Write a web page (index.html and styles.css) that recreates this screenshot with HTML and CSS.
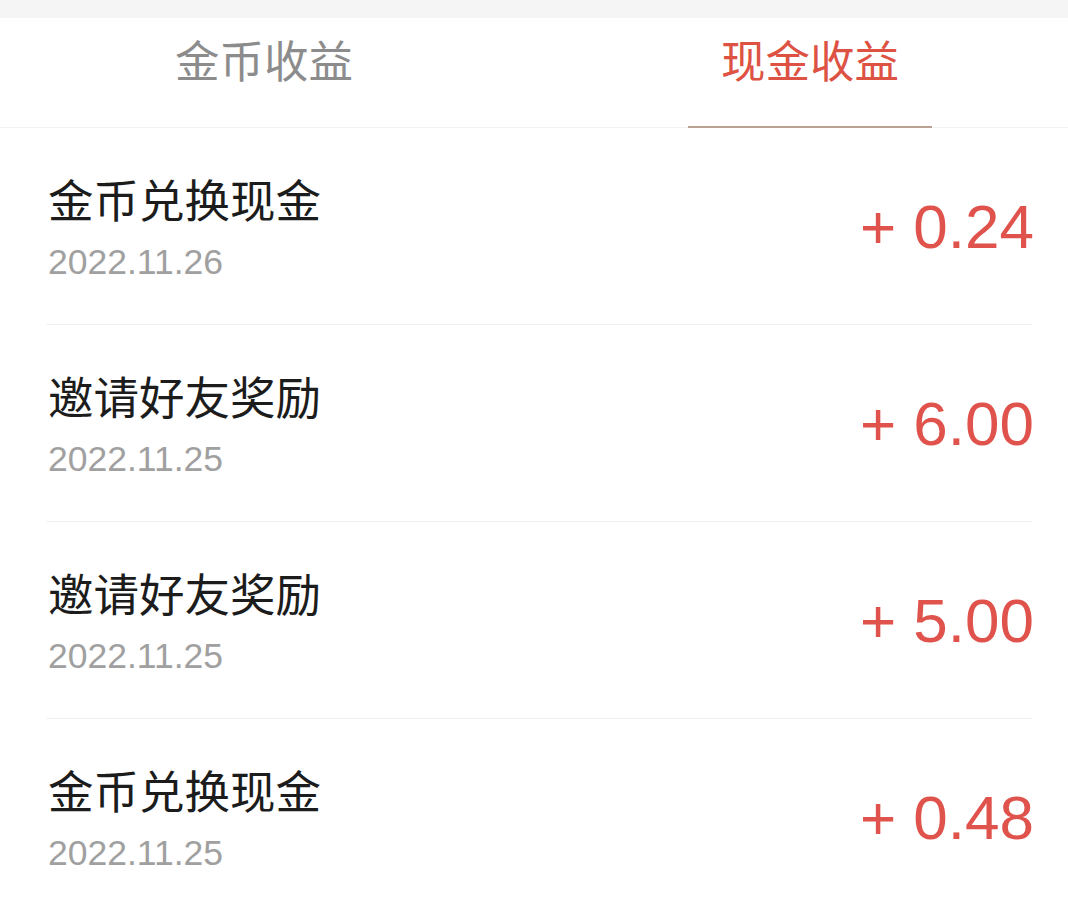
FILE: index.html
```html
<!DOCTYPE html>
<html lang="zh-CN">
<head>
  <meta charset="UTF-8">
  <title>现金收益</title>
  <link rel="stylesheet" href="styles.css">
</head>
<body>

  <div class="top-strip"></div>

  <div class="tabs">
    <div class="tab">金币收益</div>
    <div class="tab active">现金收益</div>
  </div>

  <ul class="records">
    <li class="record">
      <div class="info">
        <div class="title">金币兑换现金</div>
        <div class="date">2022.11.26</div>
      </div>
      <div class="amount">+ 0.24</div>
    </li>
    <li class="record">
      <div class="info">
        <div class="title">邀请好友奖励</div>
        <div class="date">2022.11.25</div>
      </div>
      <div class="amount">+ 6.00</div>
    </li>
    <li class="record">
      <div class="info">
        <div class="title">邀请好友奖励</div>
        <div class="date">2022.11.25</div>
      </div>
      <div class="amount">+ 5.00</div>
    </li>
    <li class="record">
      <div class="info">
        <div class="title">金币兑换现金</div>
        <div class="date">2022.11.25</div>
      </div>
      <div class="amount">+ 0.48</div>
    </li>
  </ul>

</body>
</html>
```

FILE: styles.css
```css
body {
  margin: 0;
  background: #fff;
  font-family: 'Liberation Sans', 'Noto Sans CJK SC', sans-serif;
  overflow: hidden;
}

.top-strip {
  height: 18px;
  background: #f5f5f5;
}

.tabs {
  display: flex;
  border-bottom: 1px solid #f3f3f3;
}

.tab {
  box-sizing: border-box;
  width: 244px;
  height: 110px;
  line-height: 82px;
  text-align: center;
  font-family: 'Noto Sans CJK SC', sans-serif;
  font-size: 44.5px;
  color: #8c8c8c;
  border-bottom: 2px solid transparent;
  margin-bottom: -1px;
}

.tab:first-child {
  margin-left: 142px;
}

.tab.active {
  margin-left: 302px;
  color: #dd5242;
  border-bottom-color: #bba193;
}

.records {
  list-style: none;
  margin: 0;
  padding: 0;
}

.record {
  display: flex;
  align-items: center;
  justify-content: space-between;
  height: 196px;
  margin: 0 36px 0 46px;
  padding-left: 2px;
  border-bottom: 1px solid #f0f0f0;
}

.title {
  font-family: 'Noto Sans CJK SC', sans-serif;
  font-size: 45.5px;
  line-height: 60px;
  color: #1c1c1c;
}

.date {
  margin-top: 12px;
  font-size: 35.5px;
  line-height: 44px;
  color: #a0a0a0;
}

.amount {
  margin-right: -2px;
  font-size: 62px;
  color: #e0534c;
}
```
